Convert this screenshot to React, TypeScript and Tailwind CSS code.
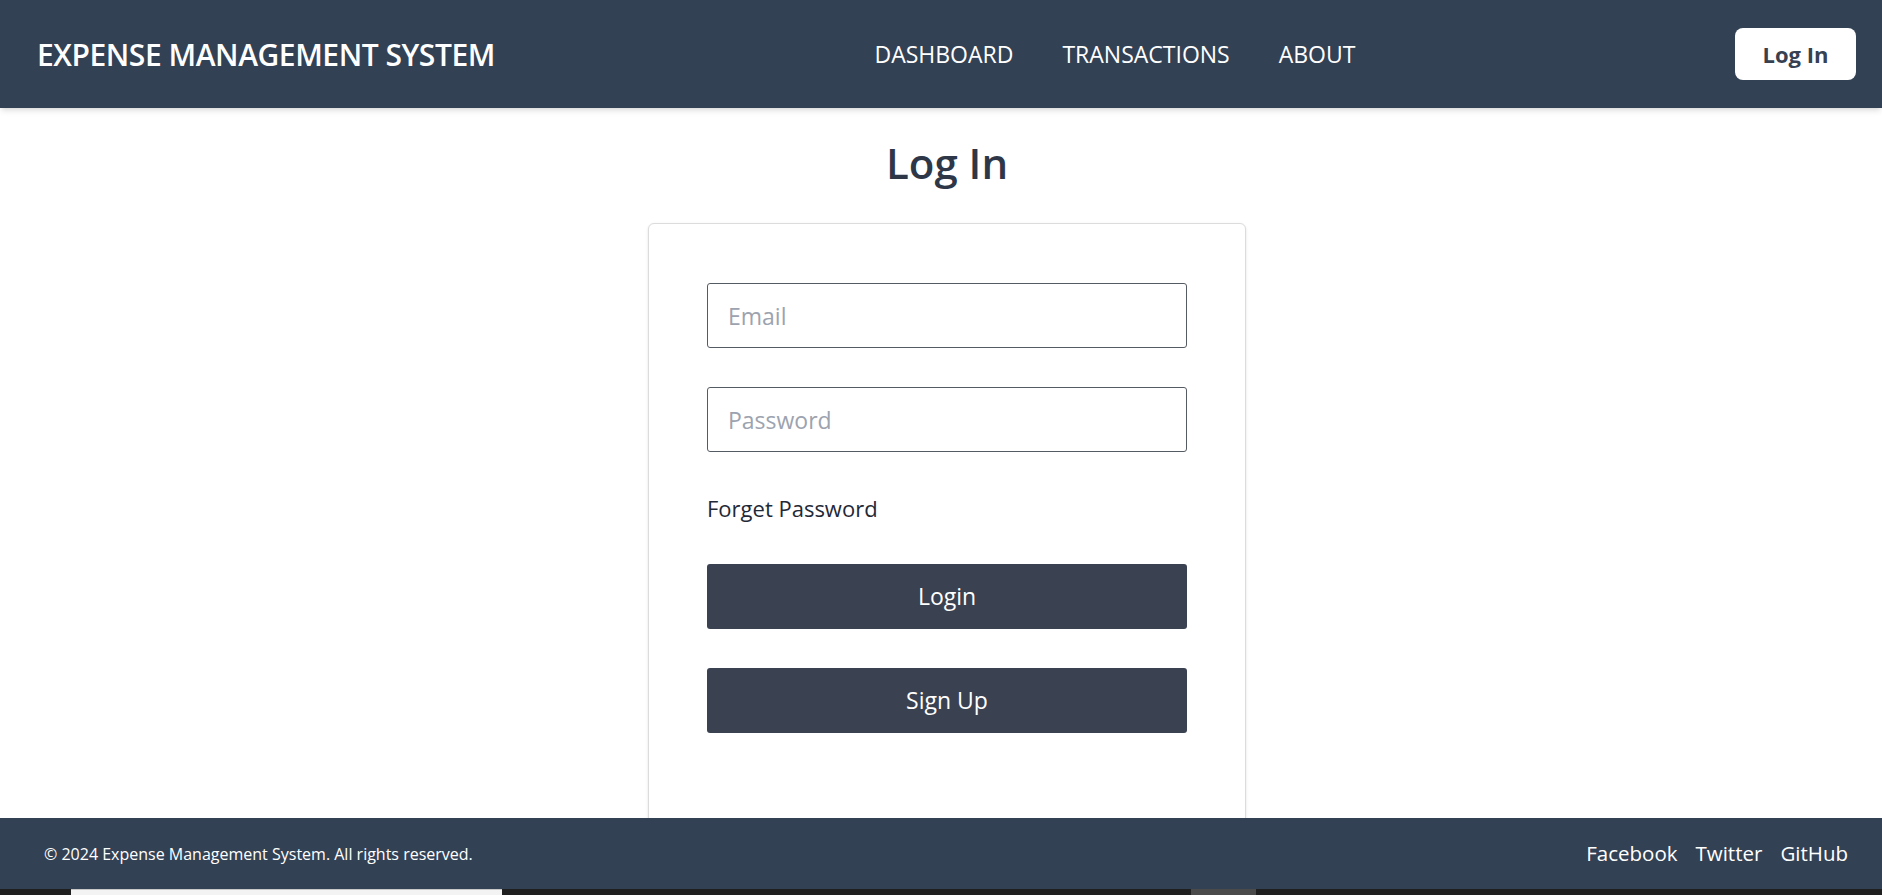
import { useState } from "react";

const font = { fontFamily: '"Open Sans", "Noto Sans", Arial, sans-serif' };

function Header() {
  return (
    <header className="relative z-10 flex h-[108px] shrink-0 items-center justify-between bg-[#334155] pl-[37px] pr-[26px] shadow-md">
      <h1 className="text-[30px] font-semibold tracking-[-0.015em] text-white">
        EXPENSE MANAGEMENT SYSTEM
      </h1>
      <nav className="flex items-center gap-[49px] text-[23px] text-white">
        <a href="#">DASHBOARD</a>
        <a href="#">TRANSACTIONS</a>
        <a href="#">ABOUT</a>
      </nav>
      <button className="flex h-[52px] w-[121px] items-center justify-center rounded-lg bg-white text-[22px] font-bold text-[#374151]">
        Log In
      </button>
    </header>
  );
}

function LoginCard() {
  const [email, setEmail] = useState("");
  const [password, setPassword] = useState("");

  return (
    <div className="w-[598px] shrink-0 rounded-md border border-[#dcdcdc] bg-white px-[58px] pt-[59px] pb-[120px] shadow-sm">
      <input
        type="email"
        value={email}
        onChange={(e) => setEmail(e.target.value)}
        placeholder="Email"
        className="block h-[65px] w-full rounded-[3px] border border-[#555b63] px-[20px] text-[23px] text-[#1f2937] placeholder:text-[#9ca3af] outline-none"
      />
      <input
        type="password"
        value={password}
        onChange={(e) => setPassword(e.target.value)}
        placeholder="Password"
        className="mt-[39px] block h-[65px] w-full rounded-[3px] border border-[#555b63] px-[20px] text-[23px] text-[#1f2937] placeholder:text-[#9ca3af] outline-none"
      />
      <a href="#" className="mt-[40px] block text-[22px] leading-[32px] text-[#1f2937]">
        Forget Password
      </a>
      <button className="mt-[40px] flex h-[65px] w-full items-center justify-center rounded-[3px] bg-[#3a4151] text-[23px] text-white">
        Login
      </button>
      <button className="mt-[39px] flex h-[65px] w-full items-center justify-center rounded-[3px] bg-[#3a4151] text-[23px] text-white">
        Sign Up
      </button>
    </div>
  );
}

function Footer() {
  return (
    <footer className="flex h-[71px] shrink-0 items-center justify-between bg-[#334155] pl-[44px] pr-[34px] text-white">
      <p className="text-[16px]">© 2024 Expense Management System. All rights reserved.</p>
      <div className="flex items-center gap-[18px] text-[20.5px]">
        <a href="#">Facebook</a>
        <a href="#">Twitter</a>
        <a href="#">GitHub</a>
      </div>
    </footer>
  );
}

export default function App() {
  return (
    <div className="flex h-[895px] flex-col overflow-hidden bg-white" style={font}>
      <Header />
      <main className="flex min-h-0 flex-1 flex-col items-center overflow-hidden pl-[12px]">
        <h2 className="mt-[28px] mb-[33px] text-[42px] leading-[54px] font-semibold text-[#2d3748]">
          Log In
        </h2>
        <LoginCard />
      </main>
      <Footer />
      <div className="flex h-[6px] shrink-0 bg-[#1f1f1f]">
        <div className="ml-[71px] w-[431px] border-t border-[#c8c8c8] bg-[#f3f3f3]" />
        <div className="ml-[689px] w-[65px] bg-[#4a4a4a]" />
      </div>
    </div>
  );
}
